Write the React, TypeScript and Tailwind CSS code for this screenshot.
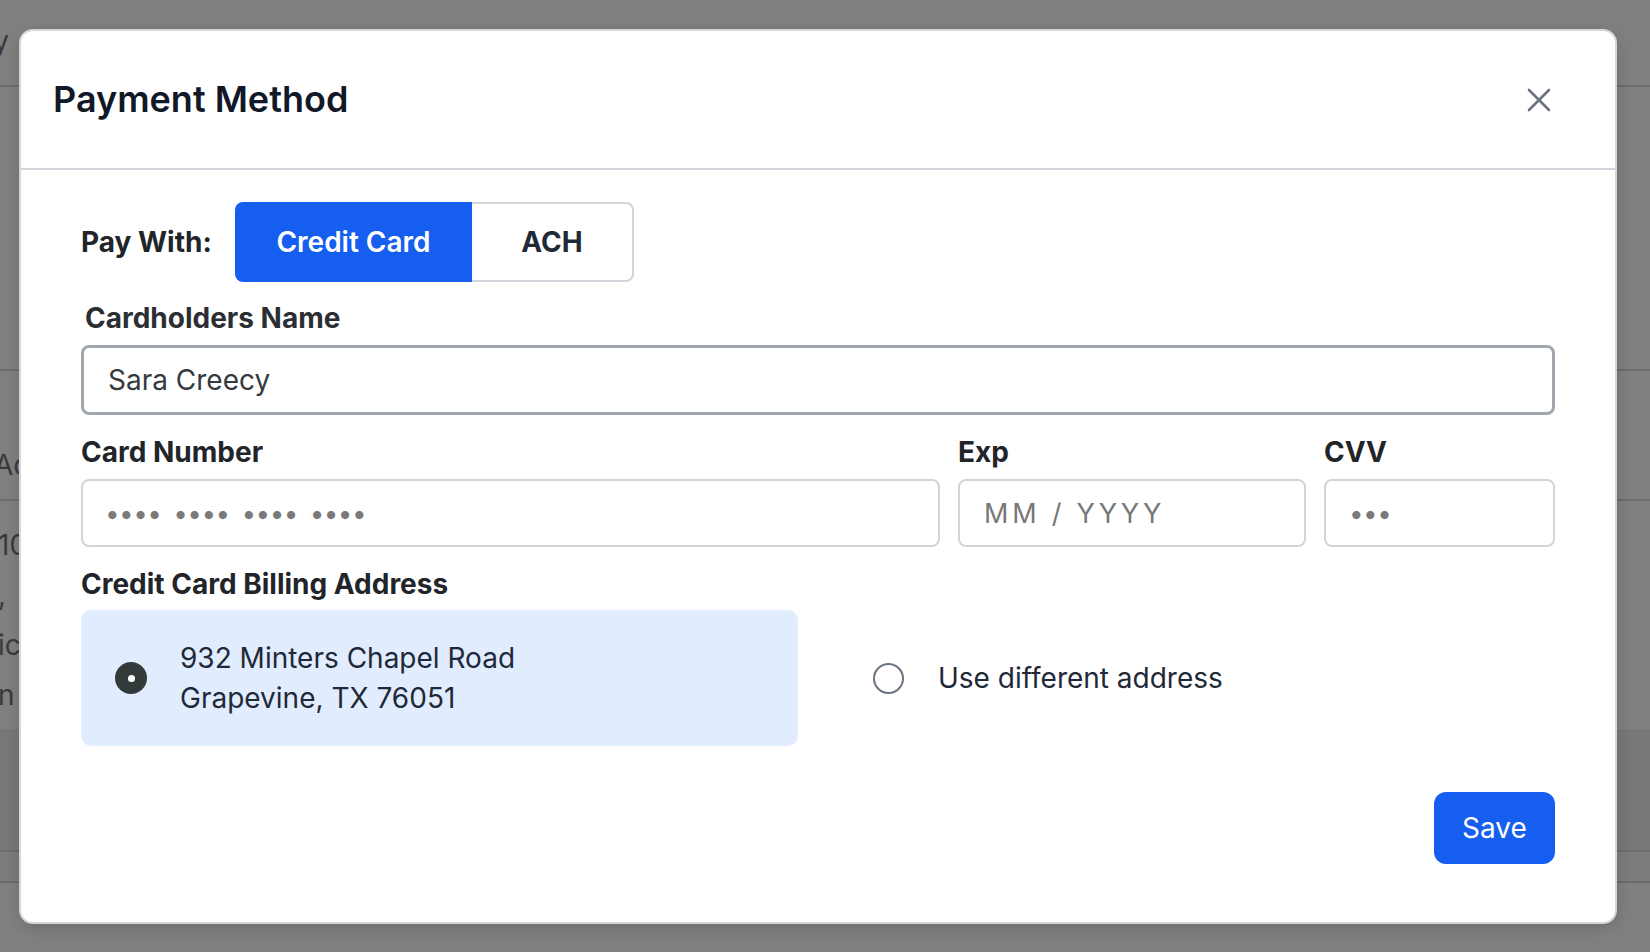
import React from 'react';

function CloseIcon() {
  return (
    <svg width="24" height="24" viewBox="0 0 24 24" fill="none" stroke="#6b7280" strokeWidth="2.6" strokeLinecap="round">
      <path d="M2 2 22 22" />
      <path d="M22 2 2 22" />
    </svg>
  );
}

function Backdrop() {
  return (
    <div className="flex flex-col text-[28px] text-[#3a3a3a] leading-none">
      <div className="h-[87px] border-b-2 border-[#6c6c6c] flex items-center">
        <div className="w-[9px] flex justify-end whitespace-nowrap pb-[4px]">Company</div>
      </div>
      <div className="h-[284px] border-b-2 border-[#6c6c6c]" />
      <div className="h-[130px] border-b-2 border-[#6c6c6c] flex items-start -ml-[6px] pt-[80px]">
        <span className="whitespace-nowrap">Ad</span>
      </div>
      <div className="flex flex-col -ml-[2px] pt-[30px] gap-[22px]">
        <span>10</span>
        <span>,</span>
        <span>ic</span>
        <span>n</span>
      </div>
      <div className="mt-[20px] h-[121px] bg-[#787878]" />
      <div className="h-[33px] border-y-2 border-[#6c6c6c] bg-[#7c7c7c]" />
    </div>
  );
}

export default function App() {
  return (
    <div className="relative h-[952px] w-full overflow-hidden bg-[#808080] font-[Inter,sans-serif]">
      <Backdrop />

      <div className="absolute left-[19px] top-[29px] w-[1598px] h-[895px] bg-white rounded-[14px] border-2 border-[#d6d6d6] shadow-[0_4px_16px_rgba(0,0,0,0.15)] flex flex-col">
        <div className="h-[139px] shrink-0 flex items-center justify-between pl-[32px] pr-[64px] border-b-2 border-[#d1d5db]">
          <h2 className="text-[36px] font-semibold text-[#111827] leading-none -mt-[2px]">Payment Method</h2>
          <button className="p-0">
            <CloseIcon />
          </button>
        </div>

        <div className="flex flex-col px-[60px] pt-[32px]">
          <div className="flex items-center h-[80px]">
            <span className="text-[28px] font-bold text-[#212529] w-[154px]">Pay With:</span>
            <div className="flex h-[80px]">
              <button className="w-[237px] h-full rounded-l-[8px] bg-[#155eef] text-white text-[28px] font-semibold">
                Credit Card
              </button>
              <button className="w-[162px] h-full rounded-r-[8px] border-2 border-l-0 border-[#d1d5db] bg-white text-[#1f2937] text-[28px] font-bold">
                ACH
              </button>
            </div>
          </div>

          <label className="mt-[19px] pl-[4px] text-[28px] leading-[34px] font-bold text-[#2b2f33]">Cardholders Name</label>
          <input
            defaultValue="Sara Creecy"
            className="mt-[10px] h-[70px] w-full rounded-[8px] border-[3px] border-[#a0a7ae] px-[24px] text-[28px] text-[#343a40] outline-none"
          />

          <div className="mt-[20px] flex gap-[18px]">
            <div className="flex flex-col w-[859px]">
              <label className="text-[28px] leading-[34px] font-bold text-[#212529]">Card Number</label>
              <input
                placeholder="•••• •••• •••• ••••"
                className="mt-[10px] h-[68px] w-full rounded-[8px] border-2 border-[#d1d5db] px-[22px] text-[26px] tracking-[-0.02em] [word-spacing:5px] placeholder:text-[#7a7a7a] outline-none"
              />
            </div>
            <div className="flex flex-col w-[348px]">
              <label className="text-[28px] leading-[34px] font-bold text-[#212529]">Exp</label>
              <input
                placeholder="MM / YYYY"
                className="mt-[10px] h-[68px] w-full rounded-[8px] border-2 border-[#d1d5db] px-[24px] text-[27px] tracking-[0.14em] placeholder:text-[#777777] outline-none"
              />
            </div>
            <div className="flex flex-col flex-1">
              <label className="text-[28px] leading-[34px] font-bold text-[#212529]">CVV</label>
              <input
                placeholder="•••"
                className="mt-[10px] h-[68px] w-full rounded-[8px] border-2 border-[#d1d5db] px-[23px] text-[26px] tracking-[-0.02em] placeholder:text-[#7a7a7a] outline-none"
              />
            </div>
          </div>

          <label className="mt-[20px] text-[28px] leading-[34px] font-bold text-[#212529]">Credit Card Billing Address</label>
          <div className="mt-[9px] flex items-center">
            <div className="w-[717px] h-[136px] rounded-[10px] bg-[#e1ecfe] flex items-center pl-[34px]">
              <span className="w-[32px] h-[32px] rounded-full bg-[#333a3a] flex items-center justify-center shrink-0">
                <span className="w-[7px] h-[7px] rounded-full bg-white" />
              </span>
              <div className="ml-[33px] text-[28px] leading-[40px] text-[#1f2937]">
                <div>932 Minters Chapel Road</div>
                <div>Grapevine, TX 76051</div>
              </div>
            </div>
            <div className="ml-[75px] flex items-center">
              <span className="w-[31px] h-[31px] rounded-full border-2 border-[#6b7280] shrink-0" />
              <span className="ml-[34px] text-[28px] text-[#1f2937]">Use different address</span>
            </div>
          </div>

          <div className="mt-[46px] flex justify-end">
            <button className="w-[121px] h-[72px] rounded-[12px] bg-[#155eef] text-white text-[28px]">Save</button>
          </div>
        </div>
      </div>
    </div>
  );
}
